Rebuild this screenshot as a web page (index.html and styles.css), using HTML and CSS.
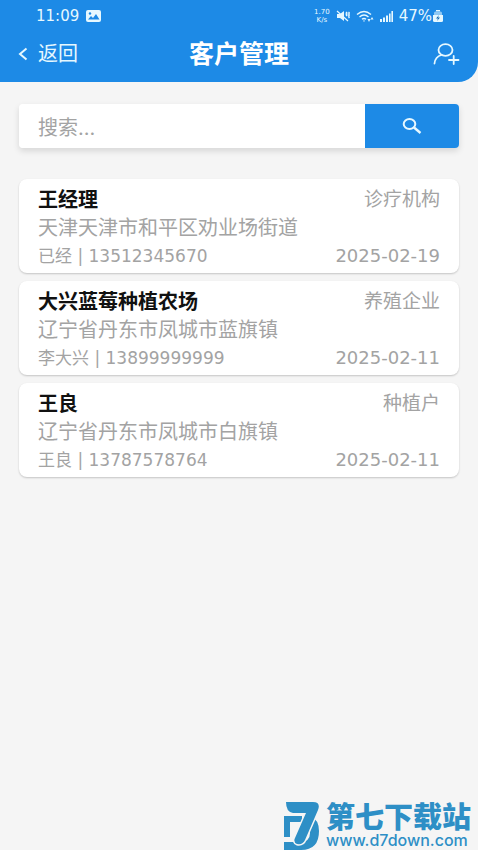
FILE: index.html
```html
<!DOCTYPE html>
<html lang="zh-CN">
<head>
<meta charset="utf-8">
<meta name="viewport" content="width=device-width, initial-scale=1">
<title>客户管理</title>
<link rel="stylesheet" href="styles.css">
</head>
<body>
<header class="header">
  <div class="status">
    <div class="status-group">
      <span>11:09</span>
      <svg viewBox="0 0 15 12" width="15" height="12" aria-hidden="true"><rect width="15" height="12" rx="2" fill="currentColor"/><path d="M2 9.500 5 6l2 2 3-4 3.500 5.500z" fill="#1d8ae6"/><circle cx="4" cy="3.500" r="1.200" fill="#1d8ae6"/></svg>
    </div>
    <div class="status-group status-right">
      <span class="speed"><span>1.70</span><span>K/s</span></span>
      <svg viewBox="0 0 14 12" width="14" height="12" aria-hidden="true"><path d="M1 4h3l4-3v10L4 8H1z" fill="currentColor"/><path d="M1 1l11 10M10 2l1 1-1 1 1 1-1 1M12.500 2l1 1-1 1 1 1-1 1 1 1-1 1" fill="none" stroke="currentColor" stroke-width="1.200"/></svg>
      <svg viewBox="0 0 18 13" width="18" height="13" aria-hidden="true"><path d="M1 4.500Q8 -1.500 15 4.500M3.500 7Q8 3 12.500 7M6 9.300Q8 7.500 10 9.300" fill="none" stroke="currentColor" stroke-width="1.400"/><path d="M7 10.500h2l-1 1.500zM11.500 9l1.500 3 1.500-3zM14.500 9.500 16 7l1.500 2.500z" fill="currentColor"/></svg>
      <svg viewBox="0 0 13 11" width="13" height="11" aria-hidden="true"><path d="M0 8h2v3H0zM3 6.500h2V11H3zM6 4.500h2V11H6zM9 2.500h1.600V11H9zM11.400 0H13v11h-1.600z" fill="currentColor"/></svg>
      <span class="battery">47%<svg viewBox="0 0 10 12" width="10" height="12" aria-hidden="true"><path d="M3 0h4v1.500H3z" fill="currentColor"/><path d="M1 3q0-1.500 1.500-1.500h5Q9 1.500 9 3v2H1z" fill="#8fc8f4"/><path d="M0 5h10v5.500q0 1.500-1.500 1.500h-7Q0 12 0 10.500z" fill="currentColor"/><path d="M6 5 3 8.500h2L4 11l3-3.500H5z" fill="#1668b0"/></svg></span>
    </div>
  </div>
  <nav class="nav">
    <a class="back" href="#"><svg viewBox="0 0 10 14" width="10" height="14" aria-hidden="true"><path d="M8.500 1.500 2 7l6.500 5.500" fill="none" stroke="currentColor" stroke-width="2"/></svg>返回</a>
    <h1 class="title">客户管理</h1>
    <button class="add" type="button" aria-label="添加客户"><svg viewBox="0 0 28 24" width="28" height="24" aria-hidden="true"><g fill="none" stroke="currentColor" stroke-width="1.800" stroke-linecap="round"><ellipse cx="13.500" cy="8" rx="7" ry="5.800"/><path d="M2.500 21.500c.500-5 3-7.500 7-8.500M17 18h9.500M21.700 14v8"/></g></svg></button>
  </nav>
</header>
<main class="content">
  <form class="search">
    <input class="search-input" type="search" placeholder="搜索..." aria-label="搜索">
    <button class="search-button" type="button" aria-label="搜索"><svg viewBox="0 0 20 16" width="20" height="16" aria-hidden="true"><ellipse cx="7.500" cy="6" rx="5.800" ry="5" fill="none" stroke="currentColor" stroke-width="2"/><path d="M12 9.500 18.500 15" stroke="currentColor" stroke-width="2.400"/></svg></button>
  </form>
  <ul class="list">
    <li class="card">
      <div class="row"><h2 class="name">王经理</h2><span class="type">诊疗机构</span></div>
      <p class="address">天津天津市和平区劝业场街道</p>
      <div class="row"><span class="contact">已经 | 13512345670</span><time class="date" datetime="2025-02-19">2025-02-19</time></div>
    </li>
    <li class="card">
      <div class="row"><h2 class="name">大兴蓝莓种植农场</h2><span class="type">养殖企业</span></div>
      <p class="address">辽宁省丹东市凤城市蓝旗镇</p>
      <div class="row"><span class="contact">李大兴 | 13899999999</span><time class="date" datetime="2025-02-11">2025-02-11</time></div>
    </li>
    <li class="card">
      <div class="row"><h2 class="name">王良</h2><span class="type">种植户</span></div>
      <p class="address">辽宁省丹东市凤城市白旗镇</p>
      <div class="row"><span class="contact">王良 | 13787578764</span><time class="date" datetime="2025-02-11">2025-02-11</time></div>
    </li>
  </ul>
</main>
<footer class="brand">
  <svg viewBox="0 0 36 48" width="36" height="48" aria-hidden="true"><path d="M0 14h18v6H6v15H0zM0 40h16q10 0 10-9 0-5-3-8l4-9q8 4 8 15 0 19-18 19H0z" fill="currentColor"/><path d="M2 0h27q8 0 5 8L21 38q-2 5-8 4-4-2-2-6l11-25H9Q2 10 2 0z" fill="currentColor" stroke="#f5f5f5" stroke-width="3" paint-order="stroke"/></svg>
  <div class="brand-text"><span class="brand-name">第七下载站</span><span class="brand-url">www.d7down.com</span></div>
</footer>
</body>
</html>
```
FILE: styles.css
```css
* { box-sizing: border-box; }

body {
  margin: 0;
  min-height: 100vh;
  display: flex;
  flex-direction: column;
  background: #f5f5f5;
  color: #a3a3a3;
  font-family: Inter, "Noto Sans CJK SC", sans-serif;
}

h1, h2, p, ul { margin: 0; padding: 0; }

button { border: 0; padding: 0; color: inherit; font: inherit; }

svg { display: block; flex: none; }

.header {
  padding: 8px 18px;
  background: #1d8ae6;
  color: #e6f8ff;
  border-bottom-right-radius: 20px;
}

.status {
  display: flex;
  justify-content: space-between;
  padding: 0 17px 0 18px;
  font-family: "DejaVu Sans", sans-serif;
  font-size: 15px;
  line-height: 16px;
}

.status-group { display: flex; align-items: center; gap: 7px; }

.status-right { gap: 6px; }

.speed {
  display: flex;
  flex-direction: column;
  align-items: center;
  font-size: 7px;
  line-height: 8px;
}

.battery { display: flex; align-items: center; gap: 1px; }

.nav {
  display: grid;
  grid-template-columns: 1fr auto 1fr;
  align-items: center;
  margin-top: 10px;
  height: 40px;
}

.back {
  display: flex;
  align-items: center;
  gap: 10px;
  color: inherit;
  font-size: 20px;
  line-height: 24px;
  text-decoration: none;
}

.title { color: #fff; font-size: 25px; line-height: 32px; font-weight: 700; }

.add { justify-self: end; background: none; }

.content { padding: 22px 19px; }

.search {
  display: flex;
  height: 44px;
  border-radius: 4px;
  box-shadow: 0 3px 6px #00000020;
}

.search-input {
  flex: 1;
  min-width: 0;
  padding: 4px 19px 0;
  border: 0;
  border-radius: 4px 0 0 4px;
  background: #fff;
  color: #333;
  font: inherit;
  font-size: 20px;
}

.search-input::placeholder { color: #a3a3a3; }

.search-button {
  width: 94px;
  display: grid;
  place-items: center;
  border-radius: 0 4px 4px 0;
  background: #1d8ae6;
  color: #e6f8ff;
}

.list {
  display: grid;
  gap: 8px;
  margin-top: 31px;
  list-style: none;
}

.card {
  padding: 7px 19px 3px;
  border-radius: 8px;
  background: #fff;
  box-shadow: 0 1px 2px #00000033;
}

.row { display: flex; justify-content: space-between; align-items: center; }

.name { color: #111; font-size: 20px; line-height: 28px; font-weight: 700; }

.type { font-size: 19px; line-height: 28px; }

.address { font-size: 20px; line-height: 28px; }

.contact, .date {
  font-family: "DejaVu Sans", "Noto Sans CJK SC", sans-serif;
  line-height: 28px;
}

.contact { font-size: 17px; }

.date { font-size: 18px; }

.brand {
  display: flex;
  align-items: flex-end;
  gap: 6px;
  margin-top: auto;
  padding-right: 7px;
  justify-content: flex-end;
  color: #2e8fc6;
}

.brand-text { display: flex; flex-direction: column; }

.brand-name {
  font-family: "Noto Sans CJK SC", sans-serif;
  font-size: 29px;
  line-height: 32px;
  font-weight: 900;
}

.brand-url { font-size: 16px; line-height: 19px; font-weight: 500; }
```
